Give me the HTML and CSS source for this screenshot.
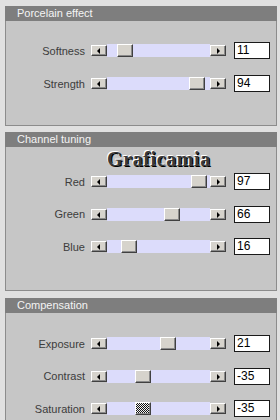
FILE: index.html
```html
<!DOCTYPE html>
<html lang="en">
<head>
    <meta charset="UTF-8">
    <title>Filter settings</title>
    <link rel="stylesheet" href="styles.css">
</head>
<body>
    <div class="panel panel-first">
        <div class="panel-title">Porcelain effect</div>
        <div class="panel-body body-porcelain">
            <div class="row">
                <span class="label">Softness</span>
                <div class="slider">
                    <span class="arrow arrow-left"></span>
                    <div class="track"><span class="thumb" style="--p: 0.11"></span></div>
                    <span class="arrow arrow-right"></span>
                </div>
                <div class="value">11</div>
            </div>
            <div class="row">
                <span class="label">Strength</span>
                <div class="slider">
                    <span class="arrow arrow-left"></span>
                    <div class="track"><span class="thumb" style="--p: 0.94"></span></div>
                    <span class="arrow arrow-right"></span>
                </div>
                <div class="value">94</div>
            </div>
        </div>
    </div>

    <div class="panel panel-second">
        <div class="panel-title">Channel tuning</div>
        <div class="panel-body body-channel">
            <div class="row">
                <span class="label">Red</span>
                <div class="slider">
                    <span class="arrow arrow-left"></span>
                    <div class="track"><span class="thumb" style="--p: 0.97"></span></div>
                    <span class="arrow arrow-right"></span>
                </div>
                <div class="value">97</div>
            </div>
            <div class="row">
                <span class="label">Green</span>
                <div class="slider">
                    <span class="arrow arrow-left"></span>
                    <div class="track"><span class="thumb" style="--p: 0.66"></span></div>
                    <span class="arrow arrow-right"></span>
                </div>
                <div class="value">66</div>
            </div>
            <div class="row">
                <span class="label">Blue</span>
                <div class="slider">
                    <span class="arrow arrow-left"></span>
                    <div class="track"><span class="thumb" style="--p: 0.16"></span></div>
                    <span class="arrow arrow-right"></span>
                </div>
                <div class="value">16</div>
            </div>
        </div>
        <!-- watermark sits over the panel -->
        <div class="watermark">Graficamia</div>
    </div>

    <div class="panel panel-third">
        <div class="panel-title">Compensation</div>
        <div class="panel-body body-comp">
            <div class="row">
                <span class="label">Exposure</span>
                <div class="slider">
                    <span class="arrow arrow-left"></span>
                    <div class="track"><span class="thumb" style="--p: 0.605"></span></div>
                    <span class="arrow arrow-right"></span>
                </div>
                <div class="value">21</div>
            </div>
            <div class="row">
                <span class="label">Contrast</span>
                <div class="slider">
                    <span class="arrow arrow-left"></span>
                    <div class="track"><span class="thumb" style="--p: 0.325"></span></div>
                    <span class="arrow arrow-right"></span>
                </div>
                <div class="value">-35</div>
            </div>
            <div class="row">
                <span class="label">Saturation</span>
                <div class="slider">
                    <span class="arrow arrow-left"></span>
                    <div class="track"><span class="thumb thumb-focus" style="--p: 0.325"></span></div>
                    <span class="arrow arrow-right"></span>
                </div>
                <div class="value">-35</div>
            </div>
        </div>
    </div>
</body>
</html>
```

FILE: styles.css
```css
body {
    margin: 0;
    padding: 0;
    background-color: #e0e0e0;
    font-family: "Liberation Sans", Arial, sans-serif;
    font-size: 11px;
    overflow: hidden;
}

.panel {
    position: relative;
    width: 272px;
    margin-left: 5px;
}

.panel-first {
    margin-top: 6px;
}

.panel-second {
    margin-top: 6px;
}

.panel-third {
    margin-top: 7px;
}

.panel-title {
    height: 15px;
    line-height: 15px;
    padding-left: 12px;
    background-color: #7e7e7e;
    color: #f4f4f4;
}

.panel-body {
    display: flex;
    flex-direction: column;
    background-color: #c6c6c6;
    border: 1px solid #8c8c8c;
    border-top: none;
}

.body-porcelain {
    gap: 16px;
    padding: 21px 0 33px;
}

.body-channel {
    gap: 15.5px;
    padding: 26px 0 35px;
}

.body-comp {
    gap: 15.5px;
    padding: 22px 0 40px;
}

.row {
    display: flex;
    align-items: center;
    height: 17px;
}

.label {
    width: 79px;
    margin-right: 6px;
    text-align: right;
    color: #3c3c3c;
}

.slider {
    display: flex;
    align-items: center;
    height: 13px;
}

.track {
    position: relative;
    width: 103px;
    height: 13px;
    background-color: #dcdcfb;
}

/* raised 3d look shared by arrows and thumbs */
.arrow,
.thumb {
    box-sizing: border-box;
    background-color: #d6d3cc;
    border-top: 1px solid #ffffff;
    border-left: 1px solid #ffffff;
    border-right: 1px solid #404040;
    border-bottom: 1px solid #404040;
    box-shadow: inset -1px -1px 0 #8a8a8a;
}

.arrow {
    position: relative;
    width: 16px;
    height: 11px;
}

.arrow::after {
    content: "";
    position: absolute;
    top: 2px;
    border-top: 3px solid transparent;
    border-bottom: 3px solid transparent;
}

.arrow-left::after {
    left: 5px;
    border-right: 3px solid #000;
}

.arrow-right::after {
    left: 6px;
    border-left: 3px solid #000;
}

.thumb {
    position: absolute;
    top: 0;
    left: calc((100% - 16px) * var(--p));
    width: 16px;
    height: 13px;
}

.thumb-focus {
    background: repeating-conic-gradient(#111 0 25%, #f4f4f4 0 50%) 0 0 / 2px 2px;
}

.value {
    box-sizing: border-box;
    width: 36px;
    height: 17px;
    margin-left: 8px;
    padding-left: 2px;
    line-height: 15px;
    background-color: #ffffff;
    border: 1px solid #1a1a1a;
    color: #000;
    font-size: 12px;
}

.watermark {
    position: absolute;
    top: 17px;
    left: 102px;
    font-family: "Liberation Serif", "Times New Roman", serif;
    font-size: 20px;
    font-weight: bold;
    line-height: 20px;
    letter-spacing: 0.6px;
    color: #3a3a3a;
    text-shadow: -1px -1px 0 #ffffff, 1px 1px 0 #000000;
}
```
